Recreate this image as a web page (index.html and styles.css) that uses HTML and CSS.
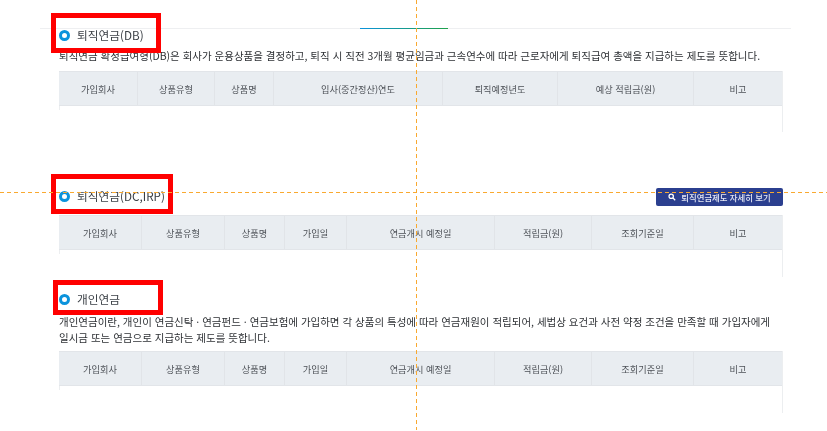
FILE: index.html
```html
<!DOCTYPE html>
<html lang="ko">
<head>
<meta charset="utf-8">
<title>퇴직연금</title>
<link rel="stylesheet" href="styles.css">
</head>
<body>
<div class="tabline"><span class="tabline-active"></span></div>
<main class="content">
  <section class="sec sec-db">
    <div class="head"><h2 class="title">퇴직연금(DB)</h2></div>
    <p class="desc">퇴직연금 확정급여형(DB)은 회사가 운용상품을 결정하고, 퇴직 시 직전 3개월 평균임금과 근속연수에 따라 근로자에게 퇴직급여 총액을 지급하는 제도를 뜻합니다.</p>
    <div class="tbl">
      <div class="row cols-db">
        <div class="th">가입회사</div><div class="th">상품유형</div><div class="th">상품명</div><div class="th">입사(중간정산)연도</div><div class="th">퇴직예정년도</div><div class="th">예상 적립금(원)</div><div class="th">비고</div>
      </div>
    </div>
  </section>
  <section class="sec sec-dc">
    <div class="head">
      <h2 class="title">퇴직연금(DC,IRP)</h2>
      <a class="btn" href="#"><svg class="btn-icon" viewBox="0 0 10 10" aria-hidden="true"><circle cx="4" cy="4" r="2.7"/><path d="M6 6l3 3"/></svg>퇴직연금제도 자세히 보기</a>
    </div>
    <div class="tbl">
      <div class="row cols-dc">
        <div class="th">가입회사</div><div class="th">상품유형</div><div class="th">상품명</div><div class="th">가입일</div><div class="th">연금개시 예정일</div><div class="th">적립금(원)</div><div class="th">조회기준일</div><div class="th">비고</div>
      </div>
    </div>
  </section>
  <section class="sec sec-ind">
    <div class="head"><h2 class="title">개인연금</h2></div>
    <p class="desc">개인연금이란, 개인이 연금신탁 · 연금펀드 · 연금보험에 가입하면 각 상품의 특성에 따라 연금재원이 적립되어, 세법상 요건과 사전 약정 조건을 만족할 때 가입자에게 일시금 또는 연금으로 지급하는 제도를 뜻합니다.</p>
    <div class="tbl">
      <div class="row cols-dc">
        <div class="th">가입회사</div><div class="th">상품유형</div><div class="th">상품명</div><div class="th">가입일</div><div class="th">연금개시 예정일</div><div class="th">적립금(원)</div><div class="th">조회기준일</div><div class="th">비고</div>
      </div>
    </div>
  </section>
</main>
<div class="mark mark-1"></div>
<div class="mark mark-2"></div>
<div class="mark mark-3"></div>
<div class="guide guide-v"></div>
<div class="guide guide-h"></div>
</body>
</html>
```
FILE: styles.css
```css
*, *::before { box-sizing: border-box; }
html, body { margin: 0; padding: 0; height: 431px; overflow: hidden; background: #fff; }
body { position: relative; font-family: "Noto Sans CJK KR", "Noto Sans", sans-serif; color: #333; }

.tabline { height: 1px; margin: 28px 36px 0 40px; background: #eeeff1; display: flex; padding-left: 320px; }
.tabline-active { width: 88px; height: 1px; background: linear-gradient(90deg, #0b93dc, #1fa24a); }

.content { width: 724px; margin-left: 59px; filter: blur(0.3px); }
.head { display: flex; align-items: center; justify-content: space-between; height: 18px; }
.title { margin: 0 0 2px; font-size: 11.7px; font-weight: 400; line-height: 16px; color: #3a3f45; display: flex; align-items: center; }
.title::before { content: ""; width: 11px; height: 11px; border: 3px solid #0b93dc; border-radius: 50%; margin-right: 7px; }
.desc { margin: 0; font-size: 10.5px; line-height: 16px; color: #2e3135; word-break: keep-all; }

.sec-db { margin-top: -2px; }
.sec-db .desc { margin-top: 3px; }
.sec-db .tbl { margin-top: 7px; height: 61px; }
.sec-dc { margin-top: 56px; }
.sec-dc .tbl { margin-top: 9px; }
.sec-ind { margin-top: 14px; }
.sec-ind .desc { margin-top: 5px; }
.sec-ind .tbl { margin-top: 5px; }

.tbl { height: 62px; border-right: 1px solid #eceef0; background: linear-gradient(#eceef0, #eceef0) left top / 1px 39px no-repeat; }
.row { display: grid; height: 35px; background: #e9edf1; border-top: 1px solid #e2e5e9; border-bottom: 1px solid #e2e5e9; }
.cols-db { grid-template-columns: 79px 77px 59px 169px 115px 136px 1fr; }
.cols-dc { grid-template-columns: 83px 83px 60px 62px 148px 97px 102px 1fr; }
.th { display: flex; align-items: center; justify-content: center; font-size: 9.2px; color: #4d5157; border-right: 1px solid #e1e4e8; }
.th:last-child { border-right: 0; }

.btn { display: flex; align-items: center; justify-content: center; width: 127px; height: 18px; background: #2b3f8f; border-radius: 2px; color: #e6e9f5; font-size: 8.4px; font-weight: 500; text-decoration: none; }
.btn-icon { width: 8px; height: 8px; margin-right: 5px; fill: none; stroke: #fff; stroke-width: 1.6; }

.mark { position: absolute; border: 5px solid #f00; }
.mark-1 { left: 51px; top: 13px; width: 110px; height: 40px; }
.mark-2 { left: 51px; top: 174px; width: 122px; height: 40px; }
.mark-3 { left: 53px; top: 280px; width: 110px; height: 35px; }

.guide { position: absolute; }
.guide-v { left: 416px; top: 0; width: 1px; height: 430px; background: repeating-linear-gradient(180deg, #f9a930 0 4px, transparent 4px 7px); }
.guide-h { left: 0; top: 192px; width: 827px; height: 1px; background: repeating-linear-gradient(90deg, #f9a930 0 4px, transparent 4px 7px); }
```
